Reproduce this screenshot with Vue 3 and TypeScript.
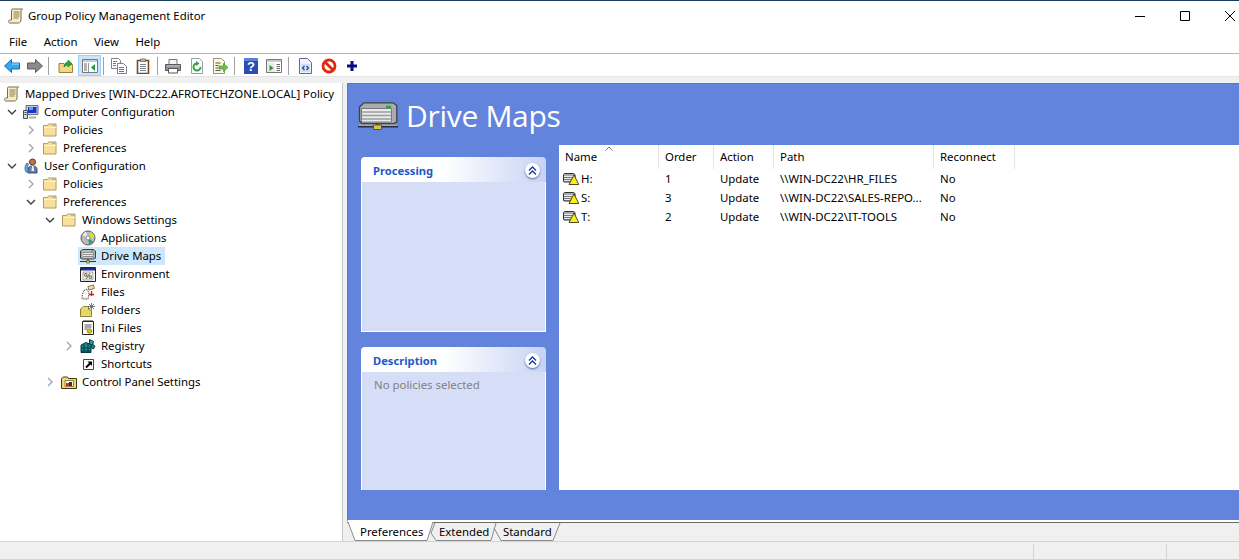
<script setup lang="ts">
interface TreeRow { label: string; icon: string; depth: number; chevron?: 'open' | 'closed'; selected?: boolean }
const tree: TreeRow[] = [
  { label: 'Mapped Drives [WIN-DC22.AFROTECHZONE.LOCAL] Policy', icon: 'scroll', depth: 0 },
  { label: 'Computer Configuration', icon: 'computer', depth: 1, chevron: 'open' },
  { label: 'Policies', icon: 'folder', depth: 2, chevron: 'closed' },
  { label: 'Preferences', icon: 'folder', depth: 2, chevron: 'closed' },
  { label: 'User Configuration', icon: 'user', depth: 1, chevron: 'open' },
  { label: 'Policies', icon: 'folder', depth: 2, chevron: 'closed' },
  { label: 'Preferences', icon: 'folder', depth: 2, chevron: 'open' },
  { label: 'Windows Settings', icon: 'folder', depth: 3, chevron: 'open' },
  { label: 'Applications', icon: 'disc', depth: 4 },
  { label: 'Drive Maps', icon: 'drive', depth: 4, selected: true },
  { label: 'Environment', icon: 'env', depth: 4 },
  { label: 'Files', icon: 'files', depth: 4 },
  { label: 'Folders', icon: 'folderstar', depth: 4 },
  { label: 'Ini Files', icon: 'ini', depth: 4 },
  { label: 'Registry', icon: 'registry', depth: 4, chevron: 'closed' },
  { label: 'Shortcuts', icon: 'shortcut', depth: 4 },
  { label: 'Control Panel Settings', icon: 'cps', depth: 3, chevron: 'closed' },
]
const indent = (r: TreeRow) => ({ paddingLeft: `${r.depth === 0 ? 4 : 4 + 19 * (r.depth - 1)}px` })

const menus = ['File', 'Action', 'View', 'Help']
const columns = [
  { label: 'Name', w: 100 },
  { label: 'Order', w: 55 },
  { label: 'Action', w: 60 },
  { label: 'Path', w: 160 },
  { label: 'Reconnect', w: 81 },
]
const rows = [
  { name: 'H:', order: '1', action: 'Update', path: '\\\\WIN-DC22\\HR_FILES', rec: 'No' },
  { name: 'S:', order: '3', action: 'Update', path: '\\\\WIN-DC22\\SALES-REPO...', rec: 'No' },
  { name: 'T:', order: '2', action: 'Update', path: '\\\\WIN-DC22\\IT-TOOLS', rec: 'No' },
]
</script>

<template>
  <div class="app">
    <svg class="defs" width="0" height="0" aria-hidden="true">
      <defs>
        <symbol id="i-scroll" viewBox="0 0 16 16">
          <path d="M4 1h10.500c-1 .7-1.500 1.500-1.500 3v8c0 1.500-1 3-2.500 3H2c-1 0-1.500-.8-1.500-1.500S1 12 2 12h1.500V3C3.500 2 3.700 1 4 1z" fill="#f3edcb" stroke="#7d6c40" />
          <path d="M5.500 4h6M5.500 6h6M5.500 8h6M5.500 10h5" stroke="#8d7a4a" />
        </symbol>
        <symbol id="i-folder" viewBox="0 0 16 16">
          <path d="M1.500 3.500h4l1-1.500h7.500v12H1.500z" fill="#f7df9e" stroke="#b79c57" />
          <path d="M2 5.500h12" stroke="#fff3c9" />
          <path d="M10 2.500h3.500v1.500H10z" fill="#8fb9e6" />
        </symbol>
        <symbol id="i-computer" viewBox="0 0 16 16">
          <path d="M3 1.500h12v9H3z" fill="#c8ccd4" stroke="#6a6f7a" />
          <path d="M5 3h8.500v6H5z" fill="#1a35c8" />
          <path d="M6 3h4v3H6z" fill="#5fa0ee" />
          <path d="M.5 6.500h4v8h-4z" fill="#d8dadd" stroke="#4a4f58" />
          <path d="M1.500 8.500h2M1.500 10.500h2" stroke="#3a3f48" />
          <path d="M6 12.500h7v2H6z" fill="#a9adb5" />
        </symbol>
        <symbol id="i-user" viewBox="0 0 16 16">
          <circle cx="9.500" cy="4" r="3" fill="#b9794a" stroke="#5a3a22" />
          <path d="M5 15v-4c0-2 2-3 4.500-3s4.500 1 4.500 3v4z" fill="#5f7fa8" stroke="#3a4f70" />
          <path d="M9 8h1.500l.5 5h-2.500z" fill="#f2f4f8" />
          <path d="M4 5c-2 2-3 6-1 9 1.500 1 2.500-.5 2-2-.5-2-.5-4 .5-6z" fill="#6aa2e0" stroke="#2f5f9f" stroke-width=".7" />
        </symbol>
        <symbol id="i-disc" viewBox="0 0 16 16">
          <circle cx="8" cy="8" r="7" fill="#b9bcc0" stroke="#55585c" />
          <path d="M8 8L11 2.200A7 7 0 0 1 14.500 8z" fill="#d8e030" />
          <path d="M8 8l5 3.500A6.500 6.500 0 0 1 9 14.300z" fill="#30a070" />
          <path d="M8 8L2.500 5A6.500 6.500 0 0 1 6 1.800z" fill="#e8eaec" />
          <circle cx="8" cy="8" r="2" fill="#fff" stroke="#666" stroke-width=".7" />
        </symbol>
        <symbol id="i-drive" viewBox="0 0 16 16">
          <path d="M2.500 1.500h11l2 1.500v7l-1 1H1.500l-1-1V3z" fill="#b4b6b8" stroke="#3e4042" />
          <path d="M2 4.500h11.500v5.500H2z" fill="#e9eaea" stroke="#77797b" stroke-width=".7" />
          <path d="M3 6.500h10M3 8.500h10" stroke="#8d8f91" />
          <path d="M11 3h2.500" stroke="#2aa846" />
          <path d="M0 13.500h16" stroke="#2e3032" />
          <path d="M8 11v2" stroke="#2e3032" />
          <path d="M6.500 12.500h3v2.500h-3z" fill="#d8c860" stroke="#5a5010" stroke-width=".7" />
        </symbol>
        <symbol id="i-drivebig" viewBox="0 0 40 28">
          <path d="M6 .8h29l3.800 2.800v16.500l-3 1.500H4L1.500 19V5z" fill="#a9abad" stroke="#3f4143" stroke-width="1.300" />
          <path d="M3.500 6.500h30v13.500h-30z" fill="#e9eaea" stroke="#77797b" />
          <path d="M4 10h29M4 13.500h29M4 17h29" stroke="#9b9d9f" stroke-width="1.300" />
          <path d="M28 5h5" stroke="#2aa846" stroke-width="2.600" />
          <path d="M1 23.200h38" stroke="#a5a7a9" stroke-width="1.600" />
          <path d="M0 24.800h40" stroke="#2c2e30" stroke-width="1.400" />
          <path d="M19.500 21.500v3" stroke="#3c3e40" stroke-width="2" />
          <path d="M15.500 23h8v4.500h-8z" fill="#d9c34a" stroke="#6a5a10" />
        </symbol>
        <symbol id="i-env" viewBox="0 0 16 16">
          <path d="M.5 1.500h15v14H.5z" fill="#fff" stroke="#222" />
          <path d="M1 2h14v2.500H1z" fill="#1a2f8a" />
          <path d="M3 6h10v8H3z" fill="#eef0f2" stroke="#777" stroke-width=".6" />
          <text x="8" y="13.200" font-size="9" text-anchor="middle" fill="#111" font-family="Liberation Sans, sans-serif">%</text>
        </symbol>
        <symbol id="i-files" viewBox="0 0 16 16">
          <path d="M8 2.500l5.500-1.500.8 3.500-5.500 1.500z" fill="#f1e2a0" stroke="#5f5a3a" stroke-width=".8" />
          <path d="M4 6.500L7 5l2 4-1 6H2l.5-5z" fill="#fff" stroke="#333" stroke-width=".9" stroke-dasharray="1.500 1" />
          <path d="M3 13.500h2.500v1.800H3z" fill="#d8c860" />
          <path d="M11.500 7v5M9 10.500h5" stroke="#dd1a1a" stroke-width="1.300" />
        </symbol>
        <symbol id="i-folderstar" viewBox="0 0 16 16">
          <path d="M.5 7l3-2.500h5v3l3 1v6H.5z" fill="#ecdc72" stroke="#8d8030" />
          <path d="M1 8h10M1 10h10M1 12h10" stroke="#d2c15a" stroke-dasharray="1 1" />
          <path d="M11.500 1v7M8 4.500h7M9 2l5 5M14 2l-5 5" stroke="#6a6a6a" stroke-width=".9" />
        </symbol>
        <symbol id="i-ini" viewBox="0 0 16 16">
          <path d="M2.500 1.500h11v13h-11z" fill="#fff" stroke="#222" />
          <path d="M3.500 1h9" stroke="#222" stroke-dasharray="1 1" stroke-width="2" />
          <path d="M4.500 5h7M4.500 7h7M4.500 9h3" stroke="#555" />
          <circle cx="9.500" cy="11" r="2.300" fill="#d8c010" stroke="#70650a" stroke-width=".6" />
        </symbol>
        <symbol id="i-registry" viewBox="0 0 16 16">
          <path d="M1 7l5-2.500 5 2v8H1z" fill="#1a8a90" stroke="#053a40" />
          <path d="M1 10h10M1 13h10M4 6v9M8 6v9" stroke="#053a40" />
          <path d="M9.500 1.500l4 2-1 3.500-3-1z" fill="#2aa4b0" stroke="#053a40" />
          <path d="M12 6l3 2-1.500 3-2.500-1.500z" fill="#1a8a90" stroke="#053a40" />
        </symbol>
        <symbol id="i-shortcut" viewBox="0 0 16 16">
          <path d="M3.500 3.500h10v10h-10z" fill="#fff" stroke="#444" />
          <path d="M6 11.500L10.500 7" stroke="#000" stroke-width="2" />
          <path d="M7.500 5.500h4.500v4.500z" fill="#000" />
        </symbol>
        <symbol id="i-cps" viewBox="0 0 16 16">
          <path d="M.5 4.500l2-1.500h4l1 1.500h8v10H.5z" fill="#ecd878" stroke="#463a10" />
          <path d="M4 6.500h8.500v6H4z" fill="#fbf6dc" stroke="#6a5a20" stroke-width=".7" />
          <path d="M5 9h3v3H5z" fill="#d22" />
          <path d="M8 8h3v4H8z" fill="#334" />
        </symbol>
        <symbol id="i-mapped" viewBox="0 0 16 12">
          <path d="M1.500 .5h9l1.500 1v6.500l-1 1H1l-.5-1V1.500z" fill="#a8aaac" stroke="#2f3133" />
          <path d="M1 3h10v5H1z" fill="#e9eaea" />
          <path d="M1 4.500h10M1 6.500h10" stroke="#77797b" />
          <path d="M11 2l4.800 9.500H6z" fill="#ffef10" stroke="#1f1f10" stroke-width=".8" />
        </symbol>
      </defs>
    </svg>

    <div class="topline"></div>

    <header class="titlebar">
      <svg class="ic16"><use href="#i-scroll" /></svg>
      <span class="title">Group Policy Management Editor</span>
      <div class="winctl">
        <svg width="12" height="12" viewBox="0 0 12 12"><path d="M1 6.500h10" stroke="#000" /></svg>
        <svg width="12" height="12" viewBox="0 0 12 12"><path d="M1.500 1.500h9v9h-9z" fill="none" stroke="#000" /></svg>
        <svg width="12" height="12" viewBox="0 0 12 12"><path d="M1 1l10 10M11 1L1 11" stroke="#000" /></svg>
      </div>
    </header>

    <nav class="menubar">
      <span v-for="m in menus" :key="m" class="menu">{{ m }}</span>
    </nav>

    <div class="toolbar">
      <svg class="tb" style="margin-left:4px" viewBox="0 0 16 16"><path d="M.5 8L7.500 1.500V5h8v6h-8v3.500z" fill="#35a7ee" stroke="#1668b0" /><path d="M8 6h7" stroke="#a5ddfb" /></svg>
      <svg class="tb" style="margin-left:7px" viewBox="0 0 16 16"><path d="M15.500 8L8.500 1.500V5h-8v6h8v3.500z" fill="#8a8a8a" stroke="#5c5c5c" /></svg>
      <i class="sep" style="margin-left:5px"></i>
      <svg class="tb" style="margin-left:9px" viewBox="0 0 16 16"><path d="M1 5.500h5l1 1h7.500v8H1z" fill="#f3d786" stroke="#9b8136" /><path d="M6 9c0-3 2-5 4-5V2l4 3.500L10 9V7C8 7 7 8 6 9z" fill="#2aa63c" stroke="#14701f" stroke-width=".6" /></svg>
      <div class="tb-active">
        <svg class="tb" viewBox="0 0 16 16"><path d="M.5 1.500h15v13H.5z" fill="#fff" stroke="#777" /><path d="M1 2h14v2H1z" fill="#c9ccd0" /><path d="M2 6h3M2 8h3M2 10h3M2 12h3" stroke="#666" /><path d="M6.500 5v9" stroke="#999" /><path d="M13 6v7l-4-3.500z" fill="#1f9a3b" /></svg>
      </div>
      <i class="sep" style="margin-left:2px"></i>
      <svg class="tb" style="margin-left:7px" viewBox="0 0 16 16"><path d="M.5.500h7l2 2v3h-3v5h-6z" fill="#fff" stroke="#7b8492" /><path d="M6.500 5.500h6l3 3v7h-9z" fill="#fff" stroke="#7b8492" /><path d="M8 9.500h5M8 11.500h5M8 13.500h5M2 3.500h4M2 5.500h3M2 7.500h3" stroke="#4a7fc0" /></svg>
      <svg class="tb" style="margin-left:8px" viewBox="0 0 16 16"><path d="M2.500 2.500h11v13h-11z" fill="#fff" stroke="#7a4a22" stroke-width="1.600" /><path d="M5.500 1h5v2.500h-5z" fill="#b9bcc0" stroke="#555" stroke-width=".7" /><path d="M5 6.500h6M5 8.500h6M5 10.500h6M5 12.500h6" stroke="#7b8492" /></svg>
      <i class="sep" style="margin-left:6px"></i>
      <svg class="tb" style="margin-left:7px" viewBox="0 0 16 16"><path d="M4 1.500h8v5H4z" fill="#f4f4f4" stroke="#777" /><path d="M.5 6.500h15v6H.5z" fill="#8b8f96" stroke="#55585e" /><path d="M3.500 10.500h9v4.500h-9z" fill="#fff" stroke="#555" /><path d="M1.500 8h13" stroke="#c6c9ce" /></svg>
      <svg class="tb" style="margin-left:8px" viewBox="0 0 16 16"><path d="M2.500.5h8l3 3v12h-11z" fill="#fdfdfd" stroke="#9aa0a8" /><path d="M11.500 9A3.500 3.500 0 1 1 8 5.500" fill="none" stroke="#2aa63c" stroke-width="2" /><path d="M7 3l3.500 2.500L7 8z" fill="#2aa63c" /></svg>
      <svg class="tb" style="margin-left:7px" viewBox="0 0 16 16"><path d="M1.500.5h8l3 3v12h-11z" fill="#fbf7dd" stroke="#9a9478" /><path d="M3.500 5h5M3.500 7.500h3M3.500 10h3M3.500 12.500h5" stroke="#555" /><path d="M7 8h4.500V5.500l4.500 4-4.500 4V11H7z" fill="#6cc243" stroke="#3d8a1f" stroke-width=".6" /></svg>
      <i class="sep" style="margin-left:6px"></i>
      <svg class="tb" style="margin-left:8px" viewBox="0 0 16 16"><path d="M1 0h14v16H1z" fill="#2a4eb0" /><path d="M1 0h14v3H1z" fill="#5f7fd0" /><text x="8" y="13" font-size="13" font-weight="700" text-anchor="middle" fill="#fff" font-family="Liberation Sans, sans-serif">?</text></svg>
      <svg class="tb" style="margin-left:7px" viewBox="0 0 16 16"><path d="M.5 1.500h15v13H.5z" fill="#fff" stroke="#777" /><path d="M1 2h14v2H1z" fill="#c9ccd0" /><path d="M1 5h7.500v9H1z" fill="#e8ebe2" /><path d="M3.500 7v6l4-3z" fill="#1f9a3b" /><path d="M10.500 6.500h3.500M10.500 8.500h3.500M10.500 10.500h3.500M10.500 12.500h3.500" stroke="#666" /></svg>
      <i class="sep" style="margin-left:6px"></i>
      <svg class="tb" style="margin-left:9px" viewBox="0 0 16 16"><path d="M1.500.5h8l4 4v11h-12z" fill="#eef3fb" stroke="#5a6f92" /><path d="M3 6h9v8H3z" fill="#cfe0f6" /><path d="M6.500 8l-2 2 2 2M8.500 8l2 2-2 2" fill="none" stroke="#1f3f9f" stroke-width="1.200" /></svg>
      <svg class="tb" style="margin-left:7px" viewBox="0 0 16 16"><circle cx="8" cy="8" r="6" fill="#fff" stroke="#e02a10" stroke-width="2.800" /><path d="M4 4l8 8" stroke="#e02a10" stroke-width="2.800" /></svg>
      <svg class="tb" style="margin-left:7px" viewBox="0 0 16 16"><path d="M6.500 3h3v3.500H13v3H9.500V13h-3V9.500H3v-3h3.500z" fill="#0a0a8a" /></svg>
    </div>

    <div class="band"></div>

    <main class="main">
      <aside class="tree">
        <div v-for="(r, i) in tree" :key="i" class="tree-row" :style="indent(r)">
          <span v-if="r.depth > 0" class="slot">
            <svg v-if="r.chevron === 'open'" width="10" height="10" viewBox="0 0 10 10"><path d="M1 3l4 4 4-4" fill="none" stroke="#404040" stroke-width="1.400" /></svg>
            <svg v-else-if="r.chevron === 'closed'" width="10" height="10" viewBox="0 0 10 10"><path d="M3 1l4 4-4 4" fill="none" stroke="#a6a6a6" stroke-width="1.400" /></svg>
          </span>
          <span class="node" :class="{ selected: r.selected }">
            <svg class="ic16"><use :href="`#i-${r.icon}`" /></svg>
            <span class="node-label">{{ r.label }}</span>
          </span>
        </div>
      </aside>

      <section class="right">
        <div class="pane">
          <div class="pane-head">
            <svg class="big" viewBox="0 0 40 28"><use href="#i-drivebig" /></svg>
            <h1>Drive Maps</h1>
          </div>
          <div class="pane-body">
            <div class="side">
              <div class="card proc">
                <div class="card-head">
                  <span>Processing</span>
                  <span class="collapse"><svg width="9" height="10" viewBox="0 0 9 10"><path d="M1 4.500l3.500-3.500L8 4.500M1 8.500L4.500 5 8 8.500" fill="none" stroke="#10389a" stroke-width="1.300" /></svg></span>
                </div>
                <div class="card-body"></div>
              </div>
              <div class="card desc">
                <div class="card-head">
                  <span>Description</span>
                  <span class="collapse"><svg width="9" height="10" viewBox="0 0 9 10"><path d="M1 4.500l3.500-3.500L8 4.500M1 8.500L4.500 5 8 8.500" fill="none" stroke="#10389a" stroke-width="1.300" /></svg></span>
                </div>
                <div class="card-body nobottom">No policies selected</div>
              </div>
            </div>
            <div class="list">
              <svg class="sort" width="8" height="5" viewBox="0 0 8 5"><path d="M.5 4.500L4 1l3.500 3.500" fill="none" stroke="#777" /></svg>
              <div class="list-head">
                <span v-for="c in columns" :key="c.label" class="col" :style="{ width: c.w + 'px' }">{{ c.label }}</span>
              </div>
              <div v-for="r in rows" :key="r.name" class="list-row">
                <span class="cell name" style="width:100px"><svg class="mapped"><use href="#i-mapped" /></svg>{{ r.name }}</span>
                <span class="cell" style="width:55px">{{ r.order }}</span>
                <span class="cell" style="width:60px">{{ r.action }}</span>
                <span class="cell" style="width:160px">{{ r.path }}</span>
                <span class="cell" style="width:81px">{{ r.rec }}</span>
              </div>
            </div>
          </div>
        </div>
        <div class="tabs">
          <svg class="tab-art" width="892" height="19" viewBox="0 0 892 19">
            <path d="M0 .5H892" stroke="#6a6a6a" fill="none" />
            <path d="M88 1l-4 10 5 7.500h55l5-17.500" fill="none" stroke="#8a8a8a" />
            <path d="M147 6l7 12.500h52l7-17.500" fill="none" stroke="#8a8a8a" />
            <path d="M1 0l7 18.500h72l6-18.500z" fill="#fff" />
            <path d="M1 0l7 18.500h72l6-18.500" fill="none" stroke="#8a8a8a" />
          </svg>
          <span class="tab t1">Preferences</span>
          <span class="tab t2">Extended</span>
          <span class="tab t3">Standard</span>
        </div>
      </section>
    </main>

    <footer class="status">
      <span class="s-a"></span><span class="s-b"></span>
    </footer>
  </div>
</template>

<style>
html, body { margin: 0; padding: 0; background: #f0f0f0; }
</style>

<style scoped>
.app {
  width: 1239px; height: 559px; overflow: hidden; display: flex; flex-direction: column;
  background: #f0f0f0; color: #000;
  font: 11.4px/16px "Noto Sans", "Open Sans", sans-serif;
}
.defs { position: absolute; }
.topline { height: 1px; background: #1b3d5e; }
.titlebar { height: 29px; background: #fff; display: flex; align-items: center; padding-left: 8px; box-sizing: border-box; }
.title { margin-left: 4px; }
.ic16 { width: 16px; height: 16px; flex: none; display: block; }
.winctl { margin-left: auto; display: flex; gap: 33px; padding-right: 3px; }
.winctl svg { display: block; }
.menubar { height: 24px; background: #fff; display: flex; align-items: center; padding-left: 9px; gap: 16.5px; border-bottom: 1px solid #b4b4c4; box-sizing: border-box; }
.toolbar { height: 22px; padding-top: 2px; box-sizing: border-box; background: #fff; display: flex; align-items: center; }
.tb { width: 16px; height: 16px; flex: none; display: block; }
.sep { width: 1px; height: 18px; background: #a0a0a0; flex: none; }
.tb-active { width: 23px; height: 21px; margin: -1px 0 0 4px; padding-top: 2px; display: flex; align-items: flex-start; justify-content: center; background: #cce4f7; border: 1px solid #99d1ff; box-sizing: border-box; }
.band { height: 7px; background: #f0f0f0; border-top: 1px solid #e4e4e4; box-sizing: border-box; }
.main { flex: 1; display: flex; min-height: 0; }
.tree { width: 343px; background: #fff; padding-top: 2px; box-sizing: border-box; border-right: 1px solid #c8c8c8; flex: none; }
.tree-row { height: 18px; display: flex; align-items: center; }
.slot { width: 19px; height: 18px; flex: none; display: flex; align-items: center; padding-left: 3px; box-sizing: border-box; }
.node { display: flex; align-items: center; height: 18px; }
.node-label { margin-left: 5px; white-space: nowrap; }
.selected { background: #cde8fb; padding: 0 4px 0 2px; margin-left: -2px; }
.right { flex: 1; min-width: 0; display: flex; flex-direction: column; padding-left: 4px; }
.pane { height: 439px; background: #6284dc; border-left: 1px solid #777; border-top: 1px solid #777; border-bottom: 2px solid #fff; box-sizing: border-box; display: flex; flex-direction: column; flex: none; }
.pane-head { height: 61px; display: flex; align-items: center; padding: 3px 0 0 10px; box-sizing: border-box; flex: none; }
.big { width: 40px; height: 28px; display: block; }
.pane-head h1 { margin: 0 0 0 8px; font-size: 30px; line-height: 36px; font-weight: 400; letter-spacing: -0.3px; color: #fff; font-family: "Open Sans", "Noto Sans", sans-serif; }
.pane-body { display: flex; flex: none; padding: 0 0 0 13px; align-items: flex-start; }
.side { width: 185px; flex: none; margin-top: 12px; }
.card { display: flex; flex-direction: column; }
.card-head { height: 25px; border-radius: 4px 4px 0 0; background: linear-gradient(90deg, #fff 45%, #c6d3f5 100%); display: flex; align-items: center; justify-content: space-between; padding: 2px 6px 0 12px; box-sizing: border-box; font-size: 11.2px; font-weight: 700; color: #2058c8; }
.collapse { width: 15px; height: 15px; border-radius: 50%; background: #fff; box-shadow: 0 1px 2px #5a6a9a; display: flex; align-items: center; justify-content: center; }
.card-body { background: #d6def7; border: 1px solid #fff; border-top: 0; box-sizing: border-box; padding: 5px 12px; color: #808080; }
.proc .card-body { height: 150px; }
.desc { margin-top: 15px; }
.desc .card-body { height: 118px; border-bottom: 0; }
.list { position: relative; flex: 1; height: 345px; margin-left: 13px; background: #fff; }
.sort { position: absolute; left: 46px; top: 1px; }
.list-head { display: flex; height: 24px; }
.col { padding-left: 6px; box-sizing: border-box; line-height: 24px; border-right: 1px solid #e5e5e5; flex: none; }
.list-row { display: flex; height: 19px; align-items: center; }
.cell { padding-left: 6px; box-sizing: border-box; flex: none; white-space: nowrap; }
.name { display: flex; align-items: center; padding-left: 4px; }
.mapped { width: 16px; height: 12px; display: block; flex: none; margin-right: 2px; }
.tabs { position: relative; height: 19px; display: flex; background: #f0f0f0; flex: none; }
.tab-art { position: absolute; left: 0; top: 0; }
.tab { position: relative; line-height: 20px; }
.t1 { margin-left: 13px; width: 79px; }
.t2 { width: 64px; }
.status { height: 18px; flex: none; background: #f0f0f0; border-top: 1px solid #d4d4d4; display: flex; justify-content: flex-end; box-sizing: border-box; padding-top: 2px; }
.s-a, .s-b { border-left: 1px solid #d4d4d4; }
.s-a { width: 132px; }
.s-b { width: 72px; }
</style>
